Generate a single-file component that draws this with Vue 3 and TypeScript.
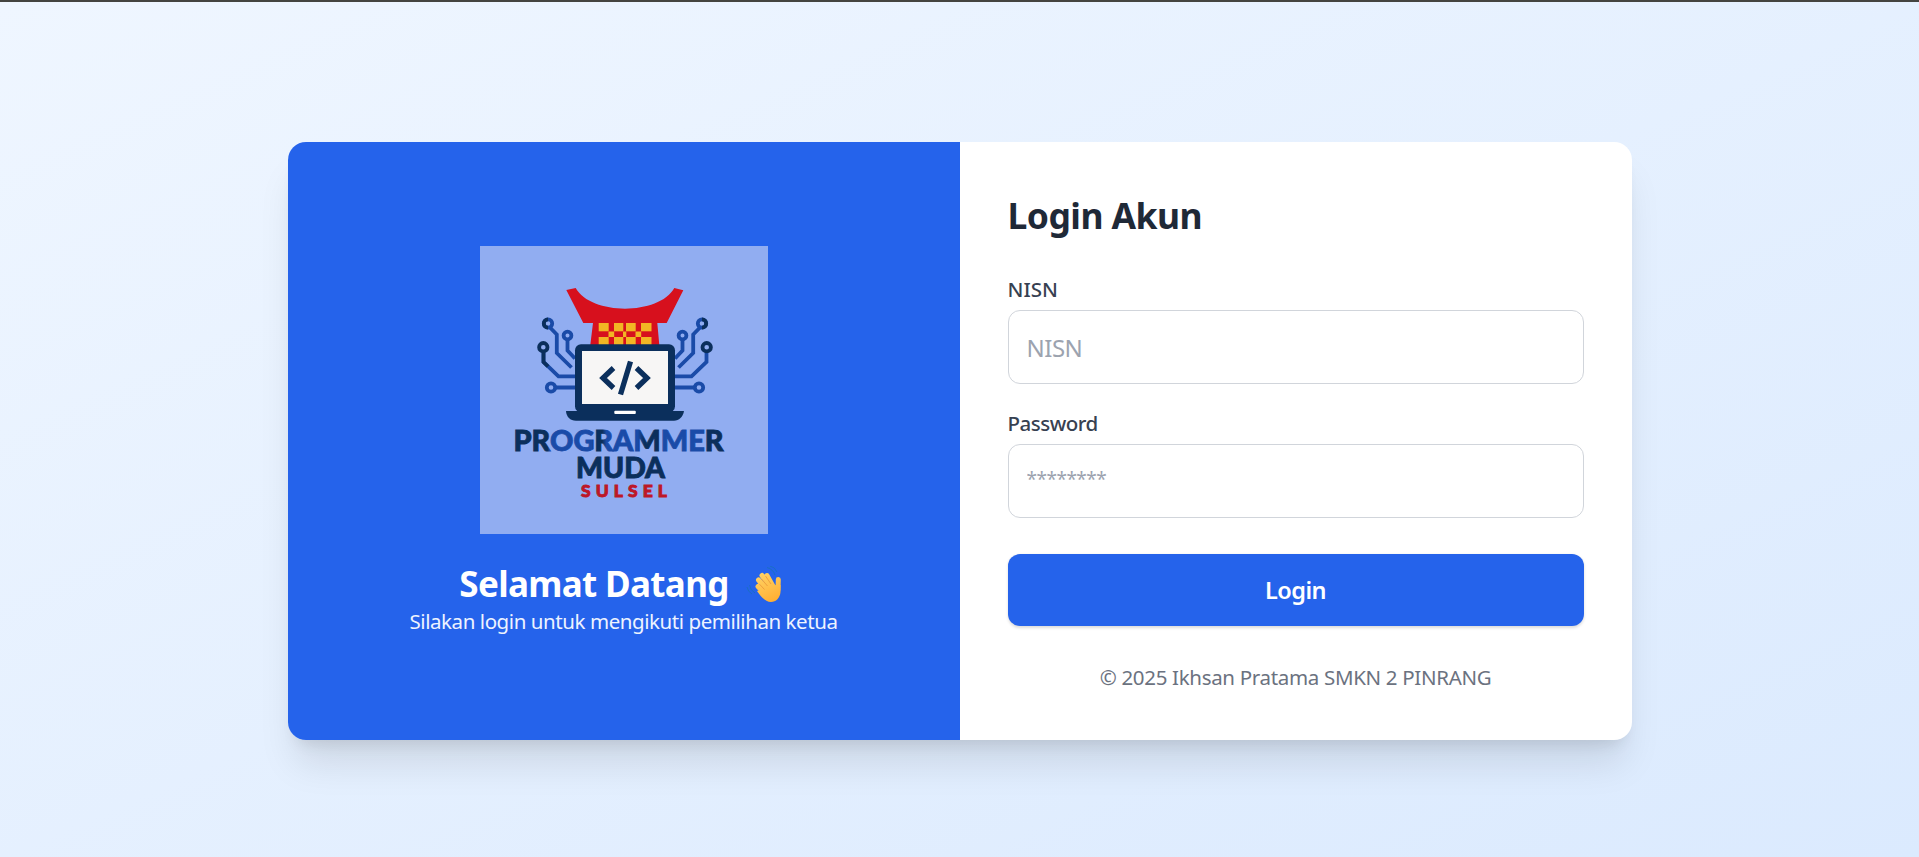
<script setup lang="ts">
import { ref } from 'vue'

const nisn = ref('')
const password = ref('')
const tileCols: [number, number][] = [[118.7, 10], [134, 9.3], [146, 9.7], [161, 10.5]]
const midCols: [number, number][] = [[128.5, 5.7], [143, 3.3], [155.5, 5.7]]
</script>

<template>
  <div class="page">
    <main class="card">
      <section class="welcome">
        <svg class="logo" viewBox="0 0 288 288" role="img" aria-label="Programmer Muda Sulsel">
          <defs>
            <linearGradient id="brand" gradientUnits="userSpaceOnUse" x1="34" y1="0" x2="244" y2="0">
              <stop offset="0.16" stop-color="#0b2f5c" /><stop offset="0.17" stop-color="#1a4ba8" />
              <stop offset="0.37" stop-color="#1a4ba8" /><stop offset="0.39" stop-color="#0b2f5c" />
              <stop offset="0.42" stop-color="#0b2f5c" /><stop offset="0.44" stop-color="#1a4ba8" />
              <stop offset="0.59" stop-color="#1a4ba8" /><stop offset="0.62" stop-color="#0b2f5c" />
              <stop offset="0.69" stop-color="#0b2f5c" /><stop offset="0.7" stop-color="#1a4ba8" />
              <stop offset="0.9" stop-color="#1a4ba8" /><stop offset="0.92" stop-color="#0b2f5c" />
            </linearGradient>
          </defs>
          <rect width="288" height="288" fill="#91adf1" />
          <g fill="none" stroke="#1a4ba8" stroke-width="3.8">
            <g>
              <path d="M70 81.500L76.800 88.500V107L91.500 121.500M87.500 94V104.500L95 112.500M63.500 106.500V116L78.500 130.300H95M76 141.500H95" />
              <circle cx="68" cy="77.500" r="4.200" /><circle cx="87.500" cy="89.500" r="3.900" />
              <circle cx="63.300" cy="101.200" r="4.200" stroke="#0b2f5c" /><circle cx="71" cy="141.500" r="4.200" />
              <path d="M68 73.300A4.200 4.200 0 0 0 68 81.700M63.500 106.500V116L68 120.500" stroke="#0b2f5c" />
            </g>
            <g transform="translate(290 0) scale(-1 1)">
              <path d="M70 81.500L76.800 88.500V107L91.500 121.500M87.500 94V104.500L95 112.500M63.500 106.500V116L78.500 130.300H95M76 141.500H95" />
              <circle cx="68" cy="77.500" r="4.200" /><circle cx="87.500" cy="89.500" r="3.900" />
              <circle cx="63.300" cy="101.200" r="4.200" stroke="#0b2f5c" /><circle cx="71" cy="141.500" r="4.200" />
              <path d="M68 73.300A4.200 4.200 0 0 0 68 81.700" stroke="#0b2f5c" />
            </g>
          </g>
          <path d="M86.300 44L95.700 42C111 69.500 179 69.500 194.300 42L203.300 44.300L186.700 77H177.300L179.300 99H110.300L113 77H103.300Z" fill="#d7101d" />
          <g fill="#f2b624">
            <template v-for="c in tileCols" :key="c[0]">
              <rect :x="c[0]" y="77" :width="c[1]" height="8.300" />
              <rect :x="c[0]" y="91" :width="c[1]" height="8" />
            </template>
            <rect v-for="c in midCols" :key="c[0]" :x="c[0]" y="85.500" :width="c[1]" height="5.500" />
          </g>
          <rect x="95" y="98.300" width="100" height="68" rx="6" fill="#0b2f5c" />
          <rect x="102" y="105" width="86" height="53" fill="#f7f6f5" />
          <path d="M86 165H204C203 171 199 174.700 194 174.700H96C90 174.700 86.500 171 86 165Z" fill="#0b2f5c" />
          <rect x="134.300" y="164.800" width="21.500" height="3.300" rx="1" fill="#fff" />
          <path d="M133.500 122L123 132L133.500 142M156.500 122L167 132L156.500 142M150.500 115.500L140.500 148.500" fill="none" stroke="#0b2f5c" stroke-width="5.300" />
          <g class="brand" stroke-width="0.9">
            <text x="33.500" y="204.600" font-size="29" textLength="210" lengthAdjust="spacingAndGlyphs" fill="url(#brand)" stroke="url(#brand)">PROGRAMMER</text>
            <text x="96" y="231.600" font-size="29" textLength="89" lengthAdjust="spacingAndGlyphs" fill="#0b2f5c" stroke="#0b2f5c">MUDA</text>
            <text x="101" y="251.400" font-size="17.500" textLength="86" fill="#bd1728" stroke="#bd1728">SULSEL</text>
          </g>
        </svg>
        <h2 class="greeting">
          <span class="greeting-text">Selamat Datang</span>
          <svg class="wave" viewBox="0 0 36 36" aria-hidden="true">
            <defs>
              <linearGradient id="skin" gradientUnits="userSpaceOnUse" x1="12" y1="6" x2="28" y2="36">
                <stop offset="0" stop-color="#ffd467" /><stop offset="1" stop-color="#ffae32" />
              </linearGradient>
            </defs>
            <path d="M21 1.500Q27 3 29 9M24 0Q29 1 31 6M3.500 19Q4 24 9 27M1 21Q2 26 6 28" stroke="#1a6fc4" fill="none" />
            <g stroke="url(#skin)" stroke-width="5" stroke-linecap="round" fill="none">
              <path d="M12 20.500L20 29M12.500 14L22 25M16 9.500L25 22M21 9.500L28 22M32.300 13.500L32 24" />
            </g>
            <path d="M17 23L25 17L31 20L34.500 19V26C34 32 30 36 25 36C20 36 15 31 11 25Z" fill="url(#skin)" />
            <path d="M13.500 18.200L18.500 23.500M15.500 13L21.500 20M19.500 10L25 18" stroke="#e8953a" stroke-width="0.8" fill="none" />
          </svg>
        </h2>
        <p class="tagline"><span>Silakan login untuk mengikuti pemilihan ketua</span></p>
      </section>
      <section class="panel">
        <h1 class="title"><span>Login Akun</span></h1>
        <form @submit.prevent>
          <label class="label label-nisn" for="nisn">NISN</label>
          <input id="nisn" v-model="nisn" class="field" type="text" placeholder="NISN" />
          <label class="label second" for="password">Password</label>
          <input id="password" v-model="password" class="field stars" type="password" placeholder="********" />
          <button class="submit" type="submit"><span>Login</span></button>
        </form>
        <p class="footer"><span>© 2025 Ikhsan Pratama SMKN 2 PINRANG</span></p>
      </section>
    </main>
  </div>
</template>

<style>
body { margin: 0; overflow: hidden; }
</style>

<style scoped>
* { box-sizing: border-box; }
h1, h2, p { margin: 0; }
.page {
  height: 857px;
  padding-top: 23px;
  border-top: 2px solid #444440;
  display: flex;
  align-items: center;
  justify-content: center;
  background: linear-gradient(to bottom right, #eff6ff, #dbeafe);
  font-family: "Noto Sans", "Open Sans", sans-serif;
}
.card {
  width: 1344px;
  height: 598px;
  display: grid;
  grid-template-columns: 1fr 1fr;
  border-radius: 18px;
  overflow: hidden;
  background: #fff;
  box-shadow: 0 30px 37.5px -7.5px rgb(0 0 0 / .1), 0 12px 15px -9px rgb(0 0 0 / .1);
}
.welcome {
  background: #2563eb;
  color: #fff;
  display: flex;
  flex-direction: column;
  align-items: center;
  padding-top: 104px;
}
.logo { width: 288px; height: 288px; flex: none; }
.brand { font-family: Lato, sans-serif; font-weight: 900; }
.greeting {
  display: flex;
  align-items: center;
  gap: 17px;
  height: 46px;
  margin-top: 27px;
  font-size: 35px;
  line-height: 46px;
  letter-spacing: -0.65px;
  white-space: nowrap;
}
.wave { width: 36px; height: 36px; margin-right: 6px; }
.tagline {
  font-size: 20.500px;
  line-height: 28px;
  letter-spacing: -0.43px;
  white-space: nowrap;
  color: #edf3ff;
}
.panel { padding: 46px 48px 48px; }
.title {
  font-size: 35.500px;
  line-height: 54px;
  letter-spacing: -0.55px;
  color: #1f2937;
}
.label {
  display: block;
  font-size: 20.500px;
  line-height: 30px;
  font-weight: 500;
  color: #374151;
  margin-bottom: 6px;
}
.label-nisn { margin-top: 32px; }
.second { margin-top: 24px; letter-spacing: -0.5px; }
.field {
  display: block;
  width: 100%;
  height: 74px;
  padding: 0 18px;
  border: 1px solid #d1d5db;
  border-radius: 12px;
  background: #fff;
  font: 24px "Noto Sans", sans-serif;
  letter-spacing: -0.5px;
}
.field::placeholder { color: #9ca3af; opacity: 1; }
.stars { font-size: 19px; letter-spacing: -0.5px; padding-bottom: 5px; }
.submit {
  width: 100%;
  height: 72px;
  margin-top: 36px;
  border: 0;
  border-radius: 12px;
  background: #2563eb;
  color: #fff;
  font: 600 23.500px "Noto Sans", sans-serif;
  letter-spacing: -0.5px;
  box-shadow: 0 1.500px 3px rgb(0 0 0 / .14);
}
.footer {
  margin-top: 36px;
  text-align: center;
  font-size: 20.500px;
  line-height: 30px;
  letter-spacing: -0.32px;
  color: #6b7280;
  white-space: nowrap;
}
</style>
